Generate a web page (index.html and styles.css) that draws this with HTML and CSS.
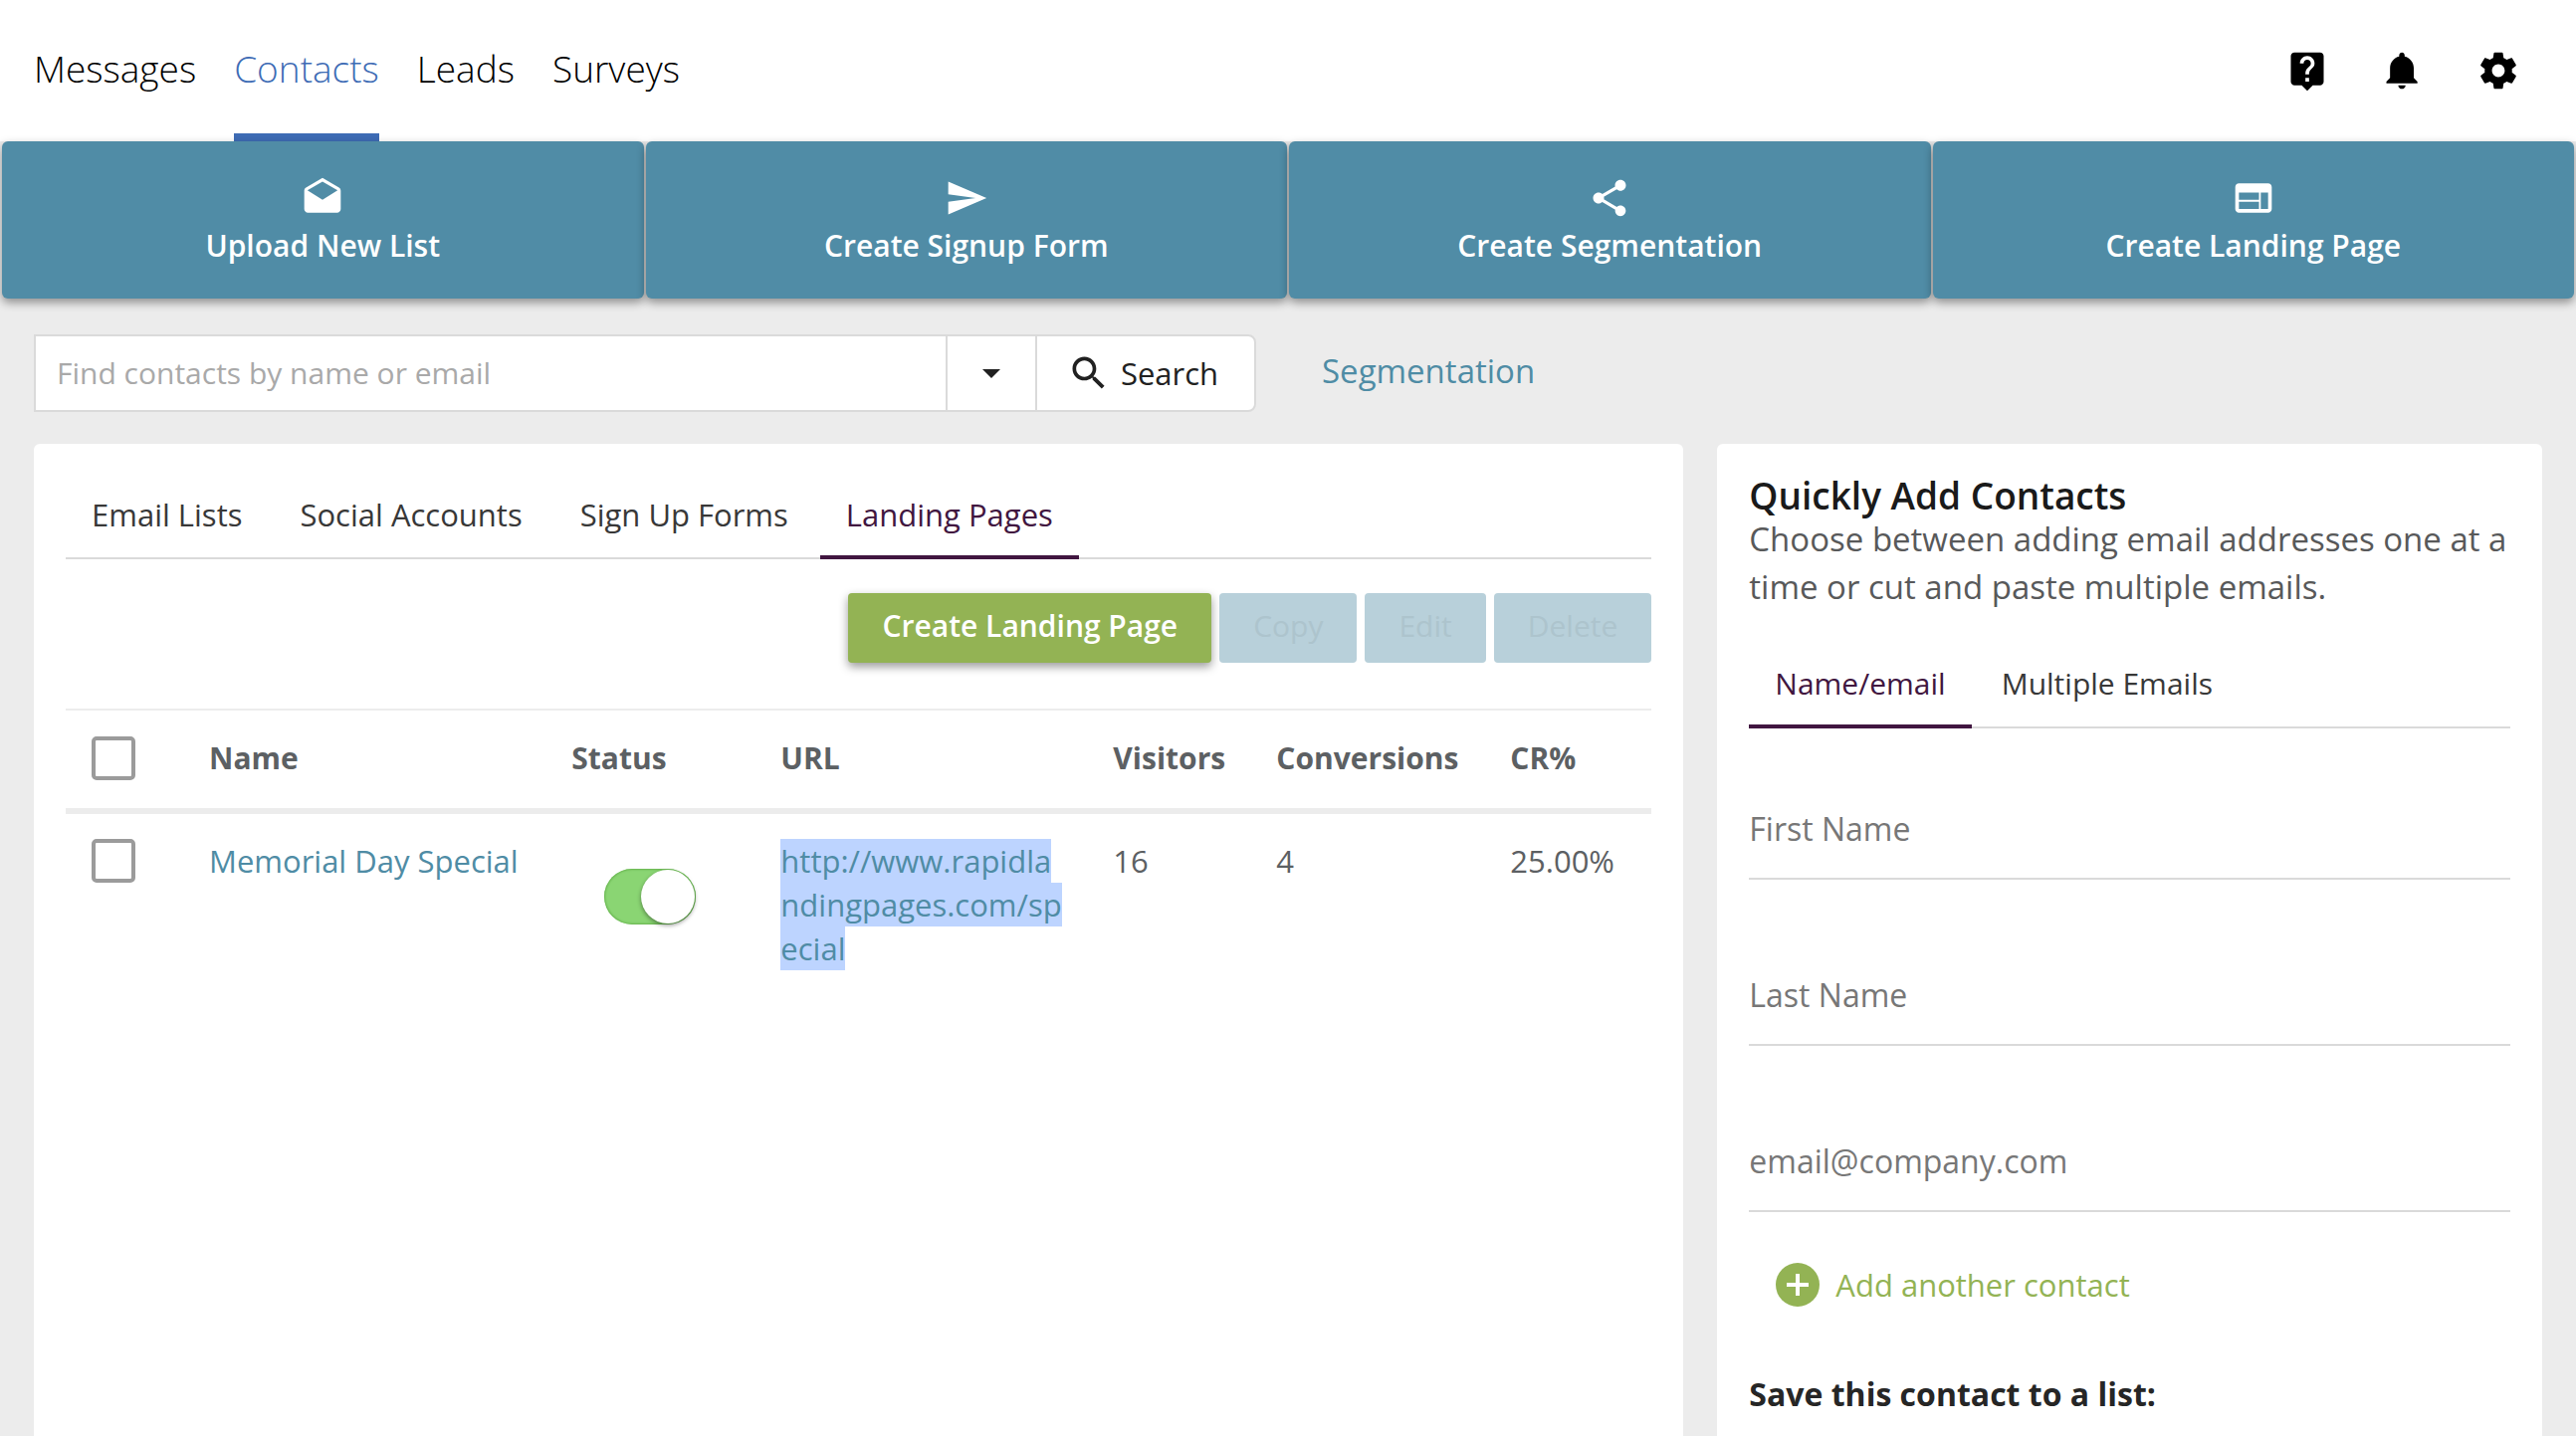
FILE: index.html
```
<!DOCTYPE html>
<html lang="en">
<head>
    <meta charset="UTF-8">
    <meta name="viewport" content="width=device-width, initial-scale=1.0">
    <title>Contacts - Landing Pages</title>
    <link rel="stylesheet" href="styles.css">
</head>
<body>
    <header class="header">
        <nav class="main-nav">
            <a href="#">Messages</a>
            <a href="#" class="active">Contacts</a>
            <a href="#">Leads</a>
            <a href="#">Surveys</a>
        </nav>
        <div class="header-icons">
            <button type="button" aria-label="Help">
                <svg class="icon" viewBox="0 0 24 24"><path d="M19 2H5c-1.11 0-2 .9-2 2v14c0 1.1.89 2 2 2h4l3 3 3-3h4c1.1 0 2-.9 2-2V4c0-1.1-.9-2-2-2zm-6 16h-2v-2h2v2zm2.07-7.75l-.9.92C13.45 11.9 13 12.5 13 14h-2v-.5c0-1.1.45-2.1 1.17-2.83l1.24-1.26c.37-.36.59-.86.59-1.41 0-1.1-.9-2-2-2s-2 .9-2 2H8c0-2.21 1.79-4 4-4s4 1.79 4 4c0 .88-.36 1.68-.93 2.25z"/></svg>
            </button>
            <button type="button" aria-label="Notifications">
                <svg class="icon" viewBox="0 0 24 24"><path d="M11.5 22c1.1 0 2-.9 2-2h-4c0 1.1.9 2 2 2zm6.5-6v-5.5c0-3.07-2.13-5.64-5-6.32V3.5c0-.83-.67-1.5-1.5-1.5S10 2.67 10 3.5v.68c-2.87.68-5 3.25-5 6.32V16l-2 2v1h17v-1l-2-2z"/></svg>
            </button>
            <button type="button" aria-label="Settings">
                <svg class="icon" viewBox="0 0 24 24"><path d="M19.43 12.98c.04-.32.07-.64.07-.98s-.03-.66-.07-.98l2.11-1.65c.19-.15.24-.42.12-.64l-2-3.46c-.12-.22-.39-.3-.61-.22l-2.49 1c-.52-.4-1.08-.73-1.69-.98l-.38-2.65C14.46 2.18 14.25 2 14 2h-4c-.25 0-.46.18-.49.42l-.38 2.65c-.61.25-1.17.59-1.69.98l-2.49-1c-.23-.09-.49 0-.61.22l-2 3.46c-.13.22-.07.49.12.64l2.11 1.65c-.04.32-.07.65-.07.98s.03.66.07.98l-2.11 1.65c-.19.15-.24.42-.12.64l2 3.46c.12.22.39.3.61.22l2.49-1c.52.4 1.08.73 1.69.98l.38 2.65c.03.24.24.42.49.42h4c.25 0 .46-.18.49-.42l.38-2.65c.61-.25 1.17-.59 1.69-.98l2.49 1c.23.09.49 0 .61-.22l2-3.46c.12-.22.07-.49-.12-.64l-2.11-1.65zM12 15.5c-1.93 0-3.5-1.57-3.5-3.5s1.57-3.5 3.5-3.5 3.5 1.57 3.5 3.5-1.57 3.5-3.5 3.5z"/></svg>
            </button>
        </div>
    </header>

    <div class="quick-actions">
        <button type="button" class="tile">
            <svg class="icon" viewBox="0 0 24 24"><path d="M21.99 8c0-.72-.37-1.35-.94-1.7L12 1 2.95 6.3C2.38 6.65 2 7.28 2 8v10c0 1.1.9 2 2 2h16c1.1 0 2-.9 2-2l-.01-10zM12 13L3.74 7.84 12 3l8.26 4.84L12 13z"/></svg>
            <span>Upload New List</span>
        </button>
        <button type="button" class="tile">
            <svg class="icon" viewBox="0 0 24 24"><path d="M2.01 21L23 12 2.01 3 2 10l15 2-15 2z"/></svg>
            <span>Create Signup Form</span>
        </button>
        <button type="button" class="tile">
            <svg class="icon" viewBox="0 0 24 24"><path d="M18 16.08c-.76 0-1.44.3-1.96.77L8.91 12.7c.05-.23.09-.46.09-.7s-.04-.47-.09-.7l7.05-4.11c.54.5 1.25.81 2.04.81 1.66 0 3-1.34 3-3s-1.34-3-3-3-3 1.34-3 3c0 .24.04.47.09.7L8.04 9.81C7.5 9.31 6.79 9 6 9c-1.66 0-3 1.34-3 3s1.34 3 3 3c.79 0 1.5-.31 2.04-.81l7.12 4.16c-.05.21-.08.43-.08.65 0 1.61 1.31 2.92 2.92 2.92s2.92-1.31 2.92-2.92-1.31-2.92-2.92-2.92z"/></svg>
            <span>Create Segmentation</span>
        </button>
        <button type="button" class="tile">
            <svg class="icon" viewBox="0 0 24 24"><path d="M20 4H4c-1.1 0-1.99.9-1.99 2L2 18c0 1.1.9 2 2 2h16c1.1 0 2-.9 2-2V6c0-1.1-.9-2-2-2zm-5 14H4v-4h11v4zm0-5H4V9h11v4zm5 5h-4V9h4v9z"/></svg>
            <span>Create Landing Page</span>
        </button>
    </div>

    <div class="search-row">
        <form class="search-group">
            <input type="text" aria-label="Find contacts" placeholder="Find contacts by name or email">
            <button type="button" class="search-options" aria-label="Search options"><span class="caret"></span></button>
            <button type="button" class="search-btn">
                <svg class="icon" viewBox="0 0 24 24"><path d="M15.5 14h-.79l-.28-.27C15.41 12.59 16 11.11 16 9.5 16 5.91 13.09 3 9.5 3S3 5.91 3 9.5 5.91 16 9.5 16c1.61 0 3.09-.59 4.23-1.57l.27.28v.79l5 4.99L20.49 19l-4.99-5zm-6 0C7.01 14 5 11.99 5 9.5S7.01 5 9.5 5 14 7.01 14 9.5 11.99 14 9.5 14z"/></svg>
                Search
            </button>
        </form>
        <a href="#" class="segmentation-link">Segmentation</a>
    </div>

    <main class="content">
        <section class="panel">
            <div class="tabs tabs-lists">
                <button type="button">Email Lists</button>
                <button type="button">Social Accounts</button>
                <button type="button">Sign Up Forms</button>
                <button type="button" class="active">Landing Pages</button>
            </div>

            <div class="table-actions">
                <button type="button" class="btn btn-create">Create Landing Page</button>
                <button type="button" class="btn" disabled>Copy</button>
                <button type="button" class="btn" disabled>Edit</button>
                <button type="button" class="btn" disabled>Delete</button>
            </div>

            <table class="pages-table">
                <colgroup>
                    <col class="col-check">
                    <col>
                    <col class="col-status">
                    <col class="col-url">
                    <col class="col-visitors">
                    <col class="col-conversions">
                    <col class="col-rate">
                </colgroup>
                <thead>
                    <tr>
                        <th><input type="checkbox" class="checkbox" aria-label="Select all"></th>
                        <th>Name</th>
                        <th>Status</th>
                        <th>URL</th>
                        <th>Visitors</th>
                        <th>Conversions</th>
                        <th>CR%</th>
                    </tr>
                </thead>
                <tbody>
                    <tr>
                        <td><input type="checkbox" class="checkbox" aria-label="Select Memorial Day Special"></td>
                        <td><a href="#">Memorial Day Special</a></td>
                        <td><input type="checkbox" class="switch" aria-label="Published" checked></td>
                        <td><a href="#" class="selected-url">http://www.rapidla<br>ndingpages.com/sp<br>ecial</a></td>
                        <td>16</td>
                        <td>4</td>
                        <td>25.00%</td>
                    </tr>
                </tbody>
            </table>
        </section>

        <aside class="panel">
            <h2>Quickly Add Contacts</h2>
            <p class="intro">Choose between adding email addresses one at a time or cut and paste multiple emails.</p>

            <div class="tabs">
                <button type="button" class="active">Name/email</button>
                <button type="button">Multiple Emails</button>
            </div>

            <form class="contact-form">
                <input type="text" aria-label="First Name" placeholder="First Name">
                <input type="text" aria-label="Last Name" placeholder="Last Name">
                <input type="email" aria-label="Email" placeholder="email@company.com">
            </form>

            <button type="button" class="add-contact">
                <svg class="icon-add" viewBox="0 0 44 44"><circle cx="22" cy="22" r="22"/><path d="M22 11v22M11 22h22"/></svg>
                Add another contact
            </button>

            <h3>Save this contact to a list:</h3>
        </aside>
    </main>
</body>
</html>
```
FILE: styles.css
```
* {
    margin: 0;
    padding: 0;
    box-sizing: border-box;
}

body {
    font-family: "Open Sans", "Noto Sans", sans-serif;
    font-size: 30px;
    line-height: 44px;
    color: #5c6063;
    background: #ececec;
    min-height: 100vh;
    display: flex;
    flex-direction: column;
}

button, input {
    font: inherit;
    color: inherit;
    background: none;
    border: none;
}

button {
    cursor: pointer;
}

a {
    color: #4f8ca5;
    text-decoration: none;
}

.icon {
    width: 44px;
    height: 44px;
    fill: currentColor;
    display: block;
}

/* Header */
.header {
    display: flex;
    justify-content: space-between;
    align-items: stretch;
    height: 142px;
    padding: 0 56px 0 34px;
    background: white;
    color: black;
}

.main-nav {
    display: flex;
    gap: 38px;
    font-size: 37px;
    font-weight: 300;
}

.main-nav a {
    display: flex;
    align-items: center;
    padding-top: 4px;
    border-bottom: 8px solid transparent;
    color: black;
}

.main-nav a.active {
    color: #3e6cb5;
    border-bottom-color: #3e6cb5;
}

.header-icons {
    display: flex;
    align-items: center;
    gap: 52px;
}

/* Quick actions */
.quick-actions {
    display: grid;
    grid-template-columns: repeat(4, 1fr);
    gap: 2px;
    padding: 0 2px;
}

.tile {
    display: flex;
    flex-direction: column;
    align-items: center;
    gap: 4px;
    padding: 35px 20px 31px;
    border-radius: 6px;
    background: #508ca6;
    color: white;
    font-weight: 600;
    box-shadow: 0 4px 10px rgba(0, 0, 0, 0.4);
}

/* Search */
.search-row {
    display: flex;
    align-items: center;
    gap: 66px;
    padding: 36px 34px 32px;
}

.search-group {
    flex: 0 1 1228px;
    display: flex;
    height: 78px;
    border: 2px solid #dadada;
    border-radius: 0 8px 8px 0;
    background: white;
    color: #212121;
}

.search-group input {
    flex: 1;
    min-width: 0;
    padding: 0 21px;
}

.search-group input::placeholder {
    color: #a9a9a9;
}

.search-options, .search-btn {
    display: flex;
    align-items: center;
    justify-content: center;
    border-left: 2px solid #dadada;
}

.search-options {
    width: 90px;
}

.search-btn {
    width: 220px;
    gap: 10px;
    padding-right: 6px;
    font-size: 31px;
}

.caret {
    border: 9px solid transparent;
    border-top-color: #212121;
    border-bottom: none;
}

.segmentation-link {
    padding-bottom: 4px;
    font-size: 33px;
}

/* Panels */
.content {
    flex: 1;
    display: grid;
    grid-template-columns: 2fr 1fr;
    gap: 34px;
    padding: 0 34px;
}

.panel {
    padding: 32px 32px 12px;
    border-radius: 6px 6px 0 0;
    background: white;
}

.tabs {
    display: flex;
    gap: 4px;
    color: #383838;
    box-shadow: inset 0 -2px #dadada;
}

.tabs-lists {
    gap: 6px;
    font-size: 31px;
}

.tabs button {
    padding: 17px 26px 19px;
    border-bottom: 4px solid transparent;
}

.tabs button.active {
    color: #411640;
    border-bottom-color: #411640;
}

.table-actions {
    display: flex;
    justify-content: flex-end;
    gap: 8px;
    margin: 34px 0 46px;
}

.btn {
    padding: 11px 34px 15px;
    border-radius: 4px;
}

.btn:disabled {
    background: #b8d0da;
    color: #adc4cd;
    cursor: default;
}

.btn-create {
    background: #93b354;
    color: white;
    font-weight: 600;
    box-shadow: 0 4px 10px rgba(0, 0, 0, 0.4);
}

/* Table */
.pages-table {
    width: 100%;
    table-layout: fixed;
    border-collapse: collapse;
}

.col-check {
    width: 118px;
}

.col-status {
    width: 210px;
}

.col-url {
    width: 334px;
}

.col-visitors {
    width: 164px;
}

.col-conversions {
    width: 235px;
}

.col-rate {
    width: 168px;
}

th, td {
    padding: 25px 0 25px 26px;
    text-align: left;
    vertical-align: top;
}

td {
    font-size: 31px;
}

thead tr {
    border-top: 2px solid #ececec;
    border-bottom: 6px solid #ececec;
}

th {
    padding: 26px 0 28px 26px;
    font-weight: 700;
}

.checkbox {
    appearance: none;
    display: block;
    width: 44px;
    height: 44px;
    border: 4px solid #9b9b9b;
    border-radius: 5px;
}

.switch {
    appearance: none;
    display: block;
    width: 92px;
    height: 56px;
    margin: 30px 0 0 33px;
    padding: 1px;
    border-radius: 28px;
    background: #8ad573;
    box-shadow: inset 0 0 2px 1px #67b44f;
}

.switch::before {
    content: "";
    display: block;
    width: 54px;
    height: 54px;
    margin-left: auto;
    border-radius: 50%;
    background: white;
    box-shadow: 0 2px 4px rgba(0, 0, 0, 0.4);
}

.selected-url {
    padding: 1px 0;
    background: #bdd4ff;
}

/* Quick add form */
h2 {
    font-size: 37px;
    font-weight: 600;
    line-height: 40px;
    color: #1a1a1a;
}

.intro {
    margin-bottom: 34px;
    font-size: 33px;
    line-height: 48px;
    color: #58595a;
}

.contact-form {
    display: flex;
    flex-direction: column;
    gap: 67px;
    margin: 52px 0 51px;
}

.contact-form input {
    height: 100px;
    width: 100%;
    padding-bottom: 2px;
    border-bottom: 2px solid #dadada;
    font-size: 32px;
}

.contact-form input::placeholder {
    color: #777;
}

.add-contact {
    display: flex;
    align-items: center;
    gap: 16px;
    padding-left: 27px;
    font-size: 31px;
    color: #93b354;
}

.icon-add {
    width: 44px;
    height: 44px;
    fill: #93b354;
    stroke: white;
    stroke-width: 4;
}

.icon-add circle {
    stroke: none;
}

h3 {
    margin-top: 66px;
    font-size: 32px;
    font-weight: 700;
    color: #262626;
}
```
